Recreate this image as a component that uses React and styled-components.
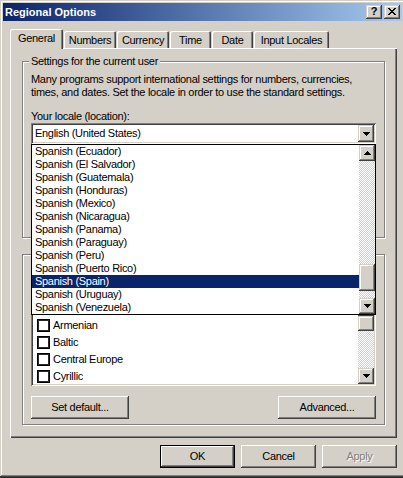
import React from "react";
import styled, { createGlobalStyle, css } from "styled-components";

const FACE = "#d4d0c8";
const SHADOW = "#808080";
const DARK = "#404040";
const HILITE = "#ffffff";
const NAVY = "#0a246a";

const GlobalStyle = createGlobalStyle`
  html, body { margin: 0; padding: 0; background: #2b2b2b; overflow: hidden; }
  body { width: 403px; height: 478px; }
  *, *::before, *::after { box-sizing: border-box; }
`;

const raisedButton = css`
  box-shadow: inset -1px -1px ${DARK}, inset 1px 1px ${HILITE},
    inset -2px -2px ${SHADOW}, inset 2px 2px ${FACE};
`;
const raisedScroll = css`
  box-shadow: inset -1px -1px ${DARK}, inset 1px 1px ${FACE},
    inset -2px -2px ${SHADOW}, inset 2px 2px ${HILITE};
`;
const sunken = css`
  box-shadow: inset 1px 1px ${SHADOW}, inset -1px -1px ${HILITE},
    inset 2px 2px ${DARK}, inset -2px -2px ${FACE};
`;

const Window = styled.div`
  width: 405px;
  height: 477px;
  padding: 3px;
  background: ${FACE};
  box-shadow: inset -1px -1px ${DARK}, inset 1px 1px ${FACE},
    inset -2px -2px ${SHADOW}, inset 2px 2px ${HILITE};
  display: flex;
  flex-direction: column;
  font-family: "Liberation Sans", Arial, sans-serif;
  font-size: 11px;
  letter-spacing: -0.3px;
  color: #000;
`;

const TitleBar = styled.div`
  height: 18px;
  display: flex;
  align-items: center;
  padding: 0 2px;
  background: linear-gradient(to right, ${NAVY}, #a6caf0);
`;

const Title = styled.div`
  flex: 1;
  color: #fff;
  font-weight: bold;
  font-size: 11px;
  letter-spacing: 0;
  line-height: 13px;
`;

const CaptionButton = styled.div`
  width: 16px;
  height: 14px;
  margin-left: ${(p) => p.$gap || 0}px;
  background: ${FACE};
  ${raisedScroll};
  display: flex;
  align-items: center;
  justify-content: center;
  font-weight: bold;
  font-size: 11px;
  letter-spacing: 0;
  line-height: 11px;
  color: #000;
  padding-bottom: 1px;
`;

const Body = styled.div`
  display: flex;
  flex-direction: column;
  padding: 8px 5px 0 7px;
`;

const TabStrip = styled.div`
  display: flex;
  align-items: flex-end;
  gap: 1px;
  height: 19px;
  position: relative;
  z-index: 1;
`;

const Tab = styled.div`
  width: ${(p) => p.$w}px;
  height: ${(p) => (p.$active ? 20 : 17)}px;
  margin-bottom: ${(p) => (p.$active ? -1 : 0)}px;
  background: ${FACE};
  border-radius: 2px 2px 0 0;
  box-shadow: inset 1px 1px ${HILITE}, inset -1px 0 ${DARK},
    inset -2px 0 ${SHADOW};
  display: flex;
  justify-content: center;
  padding-top: 3px;
  line-height: 13px;
  white-space: nowrap;
`;

const Panel = styled.div`
  width: 387px;
  height: 390px;
  padding: 13px 12px 0 12px;
  background: ${FACE};
  box-shadow: inset 1px 1px ${HILITE}, inset -1px -1px ${DARK},
    inset -2px -2px ${SHADOW};
  display: flex;
  flex-direction: column;
`;

const GroupBox = styled.div`
  position: relative;
  height: ${(p) => p.$h}px;
  margin-bottom: ${(p) => p.$mb || 0}px;
  border: 1px solid ${SHADOW};
  box-shadow: inset 1px 1px ${HILITE}, 1px 1px ${HILITE};
  padding: 11px 8px 0 8px;
  display: flex;
  flex-direction: column;
`;

const GroupLabel = styled.div`
  position: absolute;
  top: -7px;
  left: 6px;
  padding: 0 2px;
  line-height: 13px;
  background: ${FACE};
  white-space: nowrap;
`;

const Para = styled.p`
  margin: 0;
  line-height: 13px;
  white-space: nowrap;
`;

const FieldLabel = styled.div`
  margin-top: 11px;
  line-height: 13px;
`;

const ComboWrap = styled.div`
  position: relative;
  height: 21px;
  z-index: 5;
`;

const ComboField = styled.div`
  height: 100%;
  background: #fff;
  ${sunken};
  padding: 2px;
  display: flex;
  align-items: stretch;
`;

const ComboText = styled.div`
  flex: 1;
  padding-left: 2px;
  line-height: 17px;
`;

const ArrowButton = styled.div`
  width: 16px;
  height: ${(p) => p.$h || 16}px;
  flex: none;
  background: ${FACE};
  ${raisedScroll};
  display: flex;
  align-items: center;
  justify-content: center;
`;

const DropList = styled.div`
  position: absolute;
  top: 100%;
  left: 0;
  right: 0;
  height: 171px;
  background: #fff;
  border: 1px solid #000;
  display: flex;
`;

const Items = styled.div`
  flex: 1;
  display: flex;
  flex-direction: column;
`;

const Item = styled.div`
  height: 13px;
  line-height: 13px;
  padding-left: 3px;
  white-space: nowrap;
  background: ${(p) => (p.$sel ? NAVY : "transparent")};
  color: ${(p) => (p.$sel ? "#fff" : "#000")};
`;

const ScrollBar = styled.div`
  width: 16px;
  flex: none;
  display: flex;
  flex-direction: column;
`;

const Track = styled.div`
  flex: 1;
  background-color: #fff;
  background-image: repeating-conic-gradient(${FACE} 0 25%, #fff 0 50%);
  background-size: 2px 2px;
  display: flex;
  flex-direction: column;
`;

const Thumb = styled.div`
  height: ${(p) => p.$h}px;
  margin-top: ${(p) => p.$offset}px;
  background: ${FACE};
  ${raisedScroll};
`;

const CheckList = styled.div`
  margin-top: ${(p) => p.$mt}px;
  height: 88px;
  background: #fff;
  ${sunken};
  padding: 2px;
  display: flex;
  overflow: hidden;
`;

const CheckItems = styled.div`
  flex: 1;
  display: flex;
  flex-direction: column;
  padding-top: 17px;
  overflow: hidden;
`;

const CheckRow = styled.div`
  height: 17px;
  flex: none;
  display: flex;
  align-items: center;
  padding-left: 4px;
  gap: 3px;
  line-height: 13px;
`;

const CheckBox = styled.span`
  width: 13px;
  height: 13px;
  flex: none;
  background: #fff;
  box-shadow: inset 0 0 0 1px #000, inset 0 0 0 2px #2a2a2a;
`;

const ButtonRow = styled.div`
  display: flex;
  justify-content: ${(p) => p.$justify || "flex-end"};
  gap: 6px;
  margin-top: ${(p) => p.$mt}px;
`;

const PushButton = styled.div`
  width: ${(p) => p.$w}px;
  height: 23px;
  background: ${FACE};
  display: flex;
  align-items: center;
  justify-content: center;
  line-height: 13px;
  padding-bottom: 1px;
  ${(p) =>
    p.$default
      ? css`
          box-shadow: inset 0 0 0 1px #000, inset -2px -2px ${DARK},
            inset 2px 2px ${HILITE}, inset -3px -3px ${SHADOW};
        `
      : raisedButton};
  color: ${(p) => (p.$disabled ? SHADOW : "#000")};
  text-shadow: ${(p) => (p.$disabled ? `1px 1px 0 ${HILITE}` : "none")};
`;

const Arrow = ({ up }) => (
  <svg width="7" height="4" viewBox="0 0 7 4" shapeRendering="crispEdges">
    {up ? (
      <path d="M3 0h1v1h1v1h1v1h1v1H0V3h1V2h1V1h1z" fill="#000" />
    ) : (
      <path d="M0 0h7v1H6v1H5v1H4v1H3V3H2V2H1V1H0z" fill="#000" />
    )}
  </svg>
);

const CloseGlyph = () => (
  <svg width="8" height="7" viewBox="0 0 8 7" shapeRendering="crispEdges">
    <path
      d="M0 0h2v1h1v1h2V1h1V0h2v1H7v1H6v1H5v1h1v1h1v1h1v1H6V6H5V5H3v1H2v1H0V6h1V5h1V4h1V3H2V2H1V1H0z"
      fill="#000"
    />
  </svg>
);

const tabs = [
  { label: "General", w: 53, active: true },
  { label: "Numbers", w: 52 },
  { label: "Currency", w: 52 },
  { label: "Time", w: 41 },
  { label: "Date", w: 41 },
  { label: "Input Locales", w: 75 },
];

const locales = [
  "Spanish (Ecuador)",
  "Spanish (El Salvador)",
  "Spanish (Guatemala)",
  "Spanish (Honduras)",
  "Spanish (Mexico)",
  "Spanish (Nicaragua)",
  "Spanish (Panama)",
  "Spanish (Paraguay)",
  "Spanish (Peru)",
  "Spanish (Puerto Rico)",
  "Spanish (Spain)",
  "Spanish (Uruguay)",
  "Spanish (Venezuela)",
];

const languages = ["Armenian", "Baltic", "Central Europe", "Cyrillic"];

export default function App() {
  return (
    <>
      <GlobalStyle />
      <Window>
        <TitleBar>
          <Title>Regional Options</Title>
          <CaptionButton>?</CaptionButton>
          <CaptionButton $gap={2}>
            <CloseGlyph />
          </CaptionButton>
        </TitleBar>
        <Body>
          <TabStrip>
            {tabs.map((t) => (
              <Tab key={t.label} $w={t.w} $active={t.active}>
                {t.label}
              </Tab>
            ))}
          </TabStrip>
          <Panel>
            <GroupBox $h={177} $mb={16}>
              <GroupLabel>Settings for the current user</GroupLabel>
              <Para>
                Many programs support international settings for numbers, currencies,
                <br />
                times, and dates. Set the locale in order to use the standard settings.
              </Para>
              <FieldLabel>Your locale (location):</FieldLabel>
              <ComboWrap>
                <ComboField>
                  <ComboText>English (United States)</ComboText>
                  <ArrowButton $h={17}>
                    <Arrow />
                  </ArrowButton>
                </ComboField>
                <DropList>
                  <Items>
                    {locales.map((l) => (
                      <Item key={l} $sel={l === "Spanish (Spain)"}>
                        {l}
                      </Item>
                    ))}
                  </Items>
                  <ScrollBar>
                    <ArrowButton>
                      <Arrow up />
                    </ArrowButton>
                    <Track>
                      <Thumb $offset={103} $h={27} />
                    </Track>
                    <ArrowButton>
                      <Arrow />
                    </ArrowButton>
                  </ScrollBar>
                </DropList>
              </ComboWrap>
            </GroupBox>
            <GroupBox $h={171}>
              <CheckList $mt={32}>
                <CheckItems>
                  {languages.map((l) => (
                    <CheckRow key={l}>
                      <CheckBox />
                      {l}
                    </CheckRow>
                  ))}
                </CheckItems>
                <ScrollBar>
                  <ArrowButton>
                    <Arrow up />
                  </ArrowButton>
                  <Track>
                    <Thumb $offset={0} $h={15} />
                  </Track>
                  <ArrowButton>
                    <Arrow />
                  </ArrowButton>
                </ScrollBar>
              </CheckList>
              <ButtonRow $justify="space-between" $mt={10}>
                <PushButton $w={98}>Set default...</PushButton>
                <PushButton $w={98}>Advanced...</PushButton>
              </ButtonRow>
            </GroupBox>
          </Panel>
          <ButtonRow $mt={7}>
            <PushButton $w={75} $default>
              OK
            </PushButton>
            <PushButton $w={75}>Cancel</PushButton>
            <PushButton $w={75} $disabled>
              Apply
            </PushButton>
          </ButtonRow>
        </Body>
      </Window>
    </>
  );
}
